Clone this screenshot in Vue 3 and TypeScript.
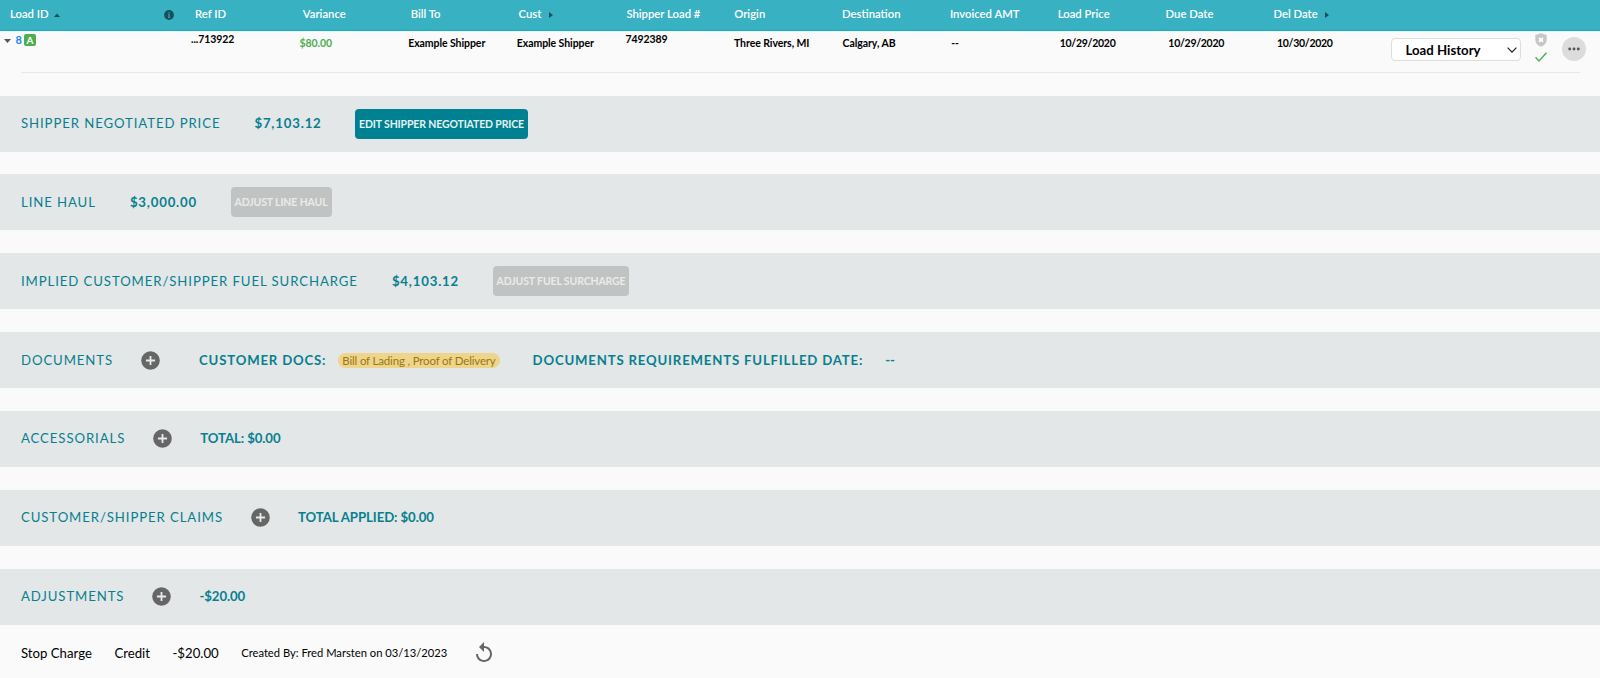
<template>
  <div class="page">
    <header class="head">
      <div class="head-id">
        <span>Load ID</span>
        <svg class="sort-up" viewBox="0 0 6 4"><path d="M0 4L3 0.5L6 4Z" /></svg>
        <svg class="info" viewBox="0 0 10 10">
          <circle cx="5" cy="5" r="4.9" fill="#16515a" />
          <path d="M4.3 2.2h1.4v1.3H4.3zM4 4.3h1.7v3H6.2v.7H4v-.7h.4V5H4z" fill="#38a0ad" />
        </svg>
      </div>
      <div v-for="col in columns" :key="col.label" class="head-cell">
        <span>{{ col.label }}</span>
        <svg v-if="col.arrow" class="sort-right" viewBox="0 0 4 6"><path d="M0 0L4 3L0 6Z" /></svg>
      </div>
    </header>

    <div class="load">
      <div class="load-id">
        <svg class="caret" viewBox="0 0 7 4"><path d="M0 0H7L3.5 4Z" fill="#555" /></svg>
        <a class="load-link">8</a>
        <span class="badge">A</span>
      </div>
      <div v-for="(cell, i) in cells" :key="i" class="load-cell" :class="cell.kind">{{ cell.text }}</div>
      <div class="actions">
        <button class="history">
          <span>Load History</span>
          <svg viewBox="0 0 10 6"><path d="M0.6 0.6L5 5.2L9.4 0.6" fill="none" stroke="#222" stroke-width="1.2" /></svg>
        </button>
        <div class="status">
          <svg class="shield" viewBox="0 0 12 14">
            <path d="M6 0.2L11.7 2V6.6C11.7 10 9.5 12.5 6 13.8C2.5 12.5 0.3 10 0.3 6.6V2Z" fill="#c6c6c6" />
            <path d="M4 4.8L8 8.8M8 4.8L4 8.8" stroke="#fff" stroke-width="1.7" />
          </svg>
          <svg class="check" viewBox="0 0 12 10">
            <path d="M0.5 5.2L4 8.9L11.5 0.8" fill="none" stroke="#4caf50" stroke-width="1.4" />
          </svg>
        </div>
        <button class="more">
          <svg viewBox="0 0 12 4">
            <circle cx="1.7" cy="2" r="1.45" /><circle cx="6" cy="2" r="1.45" /><circle cx="10.3" cy="2" r="1.45" />
          </svg>
        </button>
      </div>
    </div>

    <main class="sections">
      <section v-for="section in sections" :key="section.title" class="band">
        <span class="title">{{ section.title }}</span>
        <template v-if="section.button">
          <span class="amount">{{ section.amount }}</span>
          <button class="btn" :class="{ disabled: section.disabled }">{{ section.button }}</button>
        </template>
        <template v-else>
          <svg class="plus" viewBox="0 0 20 20">
            <circle cx="10" cy="10" r="9.8" fill="#666" />
            <path d="M10 5.2V14.8M5.2 10H14.8" stroke="#e6eaea" stroke-width="1.9" />
          </svg>
          <span v-if="section.total" class="total">{{ section.total }}</span>
          <template v-else>
            <span class="docs-label">CUSTOMER DOCS:</span>
            <span class="pill">Bill of Lading , Proof of Delivery</span>
            <span class="docs-date">DOCUMENTS REQUIREMENTS FULFILLED DATE:</span>
            <span class="docs-empty">--</span>
          </template>
        </template>
      </section>
    </main>

    <footer class="entry">
      <span class="entry-type">Stop Charge</span>
      <span class="entry-kind">Credit</span>
      <span class="entry-sum">-$20.00</span>
      <span class="entry-by">Created By: Fred Marsten on 03/13/2023</span>
      <svg class="undo" viewBox="4 1 16 20">
        <path d="M12 5V1L7 6l5 5V7c3.31 0 6 2.69 6 6s-2.69 6-6 6-6-2.69-6-6H4c0 4.42 3.58 8 8 8s8-3.58 8-8-3.58-8-8-8z" fill="#666" />
      </svg>
    </footer>
  </div>
</template>

<script setup lang="ts">
interface Column {
  label: string
  arrow?: boolean
}

interface Cell {
  text: string
  kind?: string
}

interface Section {
  title: string
  amount?: string
  button?: string
  disabled?: boolean
  total?: string
}

const columns: Column[] = [
  { label: 'Ref ID' },
  { label: 'Variance' },
  { label: 'Bill To' },
  { label: 'Cust', arrow: true },
  { label: 'Shipper Load #' },
  { label: 'Origin' },
  { label: 'Destination' },
  { label: 'Invoiced AMT' },
  { label: 'Load Price' },
  { label: 'Due Date' },
  { label: 'Del Date', arrow: true },
]

const cells: Cell[] = [
  { text: '...713922', kind: 'ref' },
  { text: '$80.00', kind: 'money' },
  { text: 'Example Shipper' },
  { text: 'Example Shipper' },
  { text: '7492389', kind: 'ref' },
  { text: 'Three Rivers, MI' },
  { text: 'Calgary, AB' },
  { text: '--' },
  { text: '10/29/2020', kind: 'date' },
  { text: '10/29/2020', kind: 'date' },
  { text: '10/30/2020', kind: 'date' },
]

const sections: Section[] = [
  { title: 'SHIPPER NEGOTIATED PRICE', amount: '$7,103.12', button: 'EDIT SHIPPER NEGOTIATED PRICE' },
  { title: 'LINE HAUL', amount: '$3,000.00', button: 'ADJUST LINE HAUL', disabled: true },
  { title: 'IMPLIED CUSTOMER/SHIPPER FUEL SURCHARGE', amount: '$4,103.12', button: 'ADJUST FUEL SURCHARGE', disabled: true },
  { title: 'DOCUMENTS' },
  { title: 'ACCESSORIALS', total: 'TOTAL: $0.00' },
  { title: 'CUSTOMER/SHIPPER CLAIMS', total: 'TOTAL APPLIED: $0.00' },
  { title: 'ADJUSTMENTS', total: '-$20.00' },
]
</script>

<style>
body {
  background: #fafafa;
}
</style>

<style scoped>
.page {
  width: 1600px;
  height: 678px;
  overflow: hidden;
  background: #fafafa;
  color: #000;
  font-family: Lato, sans-serif;
  white-space: nowrap;
}

.page * {
  box-sizing: border-box;
}

button {
  font-family: inherit;
  padding: 0;
}

svg {
  display: block;
  flex: none;
}

.head {
  display: grid;
  grid-template-columns: 185px repeat(11, 107.85px);
  height: 31px;
  padding: 0 0 3px 10px;
  background: #38b2c2;
  border-bottom: 1px solid #0cb0c1;
  color: #fff;
  font-size: 11.3px;
  font-weight: 600;
  line-height: 27px;
}

.head-id,
.head-cell {
  display: flex;
  align-items: center;
}

.sort-up {
  width: 6px;
  height: 4px;
  margin: 2px 0 0 5.5px;
  fill: #16515a;
}

.info {
  width: 10px;
  height: 10px;
  margin: 3px 21px 0 auto;
}

.sort-right {
  width: 4px;
  height: 6px;
  margin: 3px 0 0 7.5px;
  fill: #16515a;
}

.load {
  display: grid;
  grid-template-columns: 187px repeat(11, 108.6px) 1fr;
  height: 42px;
  margin-right: 20px;
  padding-left: 4px;
  background: linear-gradient(#e8e8e8, #e8e8e8) 21px 100% / 100% 1px no-repeat;
  font-size: 11px;
  font-weight: 700;
}

.load-id {
  display: flex;
  align-items: center;
  height: 17px;
}

.caret {
  width: 7px;
  height: 4px;
  margin-top: 2px;
}

.load-link {
  margin-left: 4.5px;
  color: #1e88f5;
}

.badge {
  width: 12px;
  height: 12px;
  margin-left: 2px;
  border-radius: 2px;
  background: #4caf50;
  color: #fff;
  font-size: 10px;
  line-height: 12px;
  text-align: center;
}

.load-cell {
  padding-top: 5px;
  font-size: 10.5px;
  line-height: 14px;
  letter-spacing: -0.07px;
}

.ref {
  padding-top: 1px;
}

.money {
  color: #4caf50;
  letter-spacing: -0.1px;
}

.date {
  letter-spacing: -0.28px;
}

.actions {
  display: flex;
  padding-left: 5px;
}

.history {
  display: flex;
  align-items: center;
  justify-content: space-between;
  width: 130px;
  height: 23px;
  margin-top: 7px;
  padding: 0 3px 0 14px;
  border: 1px solid #ddd;
  border-radius: 4px;
  background: #fff;
  color: #000;
  font-size: 13.2px;
  font-weight: 700;
}

.history svg {
  width: 10px;
  height: 6px;
}

.status {
  margin: 2px 0 0 14px;
}

.shield {
  width: 12px;
  height: 14px;
}

.check {
  width: 12px;
  height: 10px;
  margin-top: 5px;
}

.more {
  display: flex;
  align-items: center;
  justify-content: center;
  width: 24px;
  height: 24px;
  margin: 6px 0 0 15.8px;
  border: 0;
  border-radius: 50%;
  background: #dcdcdc;
  fill: #555;
}

.more svg {
  width: 12px;
  height: 4px;
}

.sections {
  display: grid;
  gap: 22.85px;
  padding-top: 22.5px;
}

.band {
  display: flex;
  align-items: center;
  height: 56px;
  padding: 0 0 1px 21px;
  background: #e3e7e7;
  color: #087f8f;
  font-size: 13.2px;
}

.title {
  letter-spacing: 0.9px;
}

.amount {
  margin-left: 34px;
  font-weight: 700;
  letter-spacing: 0.82px;
}

.btn {
  height: 30px;
  margin: 1px 0 0 33.5px;
  padding: 0 4px;
  border: 0;
  border-radius: 4px;
  background: #008191;
  color: #e6f2f3;
  font-size: 10.5px;
  font-weight: 700;
  letter-spacing: -0.14px;
}

.btn.disabled {
  background: #c1c3c2;
  color: #e8ebea;
}

.plus {
  width: 19px;
  height: 19px;
  margin: 1px 28px 0 28px;
}

.total {
  font-weight: 700;
  letter-spacing: -0.08px;
}

.docs-label,
.docs-date {
  font-weight: 700;
  letter-spacing: 0.82px;
}

.docs-label {
  margin-left: 11px;
}

.pill {
  height: 15px;
  margin: 2px 0 0 12px;
  padding: 0 4px;
  border-radius: 8px;
  background: #efd48b;
  color: #987812;
  font-size: 11.5px;
  line-height: 15px;
  letter-spacing: -0.17px;
}

.docs-date {
  margin-left: 33px;
}

.docs-empty {
  margin-left: 22px;
  font-weight: 700;
}

.entry {
  display: flex;
  align-items: center;
  height: 56px;
  padding-left: 21px;
  font-size: 13.2px;
}

.entry-kind,
.entry-sum,
.entry-by {
  margin-left: 22.5px;
}

.entry-by {
  font-size: 11.2px;
}

.undo {
  width: 16px;
  height: 20px;
  margin: 0 0 2px 29px;
}
</style>
